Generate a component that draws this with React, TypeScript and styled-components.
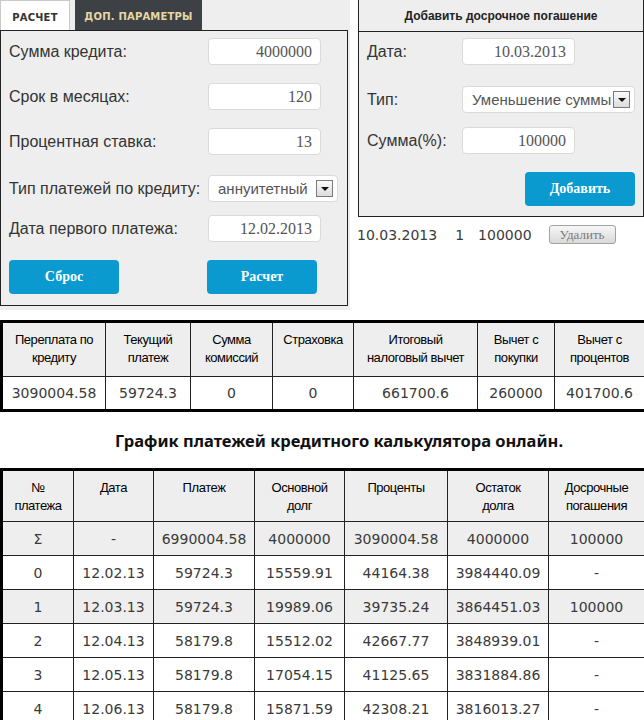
import React from 'react'
import styled, { createGlobalStyle } from 'styled-components'

const GlobalStyle = createGlobalStyle`
  html, body {
    margin: 0;
    padding: 0;
    background: #fff;
  }
  body {
    font-family: "Liberation Sans", Arial, sans-serif;
    color: #333;
  }
`

const Page = styled.div`
  width: 644px;
  overflow: hidden;
`

const Top = styled.div`
  display: flex;
  align-items: flex-start;
`

const LeftBlock = styled.div`
  width: 350px;
  height: 310px;
  background: #eeeeee;
`

const Tabs = styled.div`
  display: flex;
  gap: 5px;
  height: 30px;
`

const Tab = styled.div<{ $active?: boolean; $w: number }>`
  box-sizing: border-box;
  width: ${p => p.$w}px;
  height: 30px;
  display: flex;
  align-items: center;
  justify-content: center;
  padding-top: 3px;
  font: bold 10px "DejaVu Sans", Verdana, sans-serif;
  letter-spacing: 0.2px;
  background: ${p => (p.$active ? '#fff' : '#3d4146')};
  color: ${p => (p.$active ? '#333' : '#e4d9a4')};
  border: ${p => (p.$active ? '1px solid #c9c9c9' : 'none')};
  border-bottom: none;
`

const Panel = styled.div`
  box-sizing: border-box;
  width: 348px;
  height: 276px;
  border: 1px solid #222;
  padding: 7px 0 0 8px;
  display: flex;
  flex-direction: column;
`

const Row = styled.div<{ $mt?: number }>`
  display: flex;
  align-items: center;
  height: 27px;
  margin-top: ${p => p.$mt ?? 0}px;
`

const Label = styled.div<{ $w: number }>`
  width: ${p => p.$w}px;
  font-size: 16px;
  color: #333;
`

const Field = styled.input<{ $w: number }>`
  box-sizing: border-box;
  width: ${p => p.$w}px;
  height: 27px;
  border: 1px solid #dadada;
  border-radius: 4px;
  background: #fff;
  padding: 0 8px 0 0;
  margin: 0;
  text-align: right;
  font: 16px "Liberation Serif", Georgia, serif;
  color: #555;
  outline: none;
`

const Select = styled.div<{ $w: number }>`
  box-sizing: border-box;
  width: ${p => p.$w}px;
  height: 27px;
  border: 1px solid #dadada;
  border-radius: 4px;
  background: #fff;
  display: flex;
  align-items: center;
  justify-content: space-between;
  padding: 0 4px 0 9px;
  font: 15px "Liberation Sans", Arial, sans-serif;
  color: #555;
`

const Arrow = styled.span`
  box-sizing: border-box;
  width: 17px;
  height: 17px;
  border: 1px solid #7a7a7a;
  background: linear-gradient(#fafafa, #dcdcdc);
  display: flex;
  align-items: center;
  justify-content: center;
  &::after {
    content: '';
    border-left: 4px solid transparent;
    border-right: 4px solid transparent;
    border-top: 4px solid #111;
  }
`

const Buttons = styled.div`
  display: flex;
  margin-top: 18px;
  gap: 88px;
`

const BlueButton = styled.button`
  box-sizing: border-box;
  width: 110px;
  height: 34px;
  border: none;
  border-radius: 4px;
  background: #0b9ad0;
  color: #fff;
  font: bold 14px "Liberation Serif", Georgia, serif;
  padding: 0;
  cursor: pointer;
`

const RightCol = styled.div`
  margin-left: 8px;
  width: 286px;
`

const RightPanel = styled.div`
  box-sizing: border-box;
  height: 217px;
  background: #eeeeee;
  border: 1px solid #222;
  border-top: none;
`

const PanelHead = styled.div`
  height: 31px;
  border-bottom: 1px solid #222;
  display: flex;
  align-items: center;
  justify-content: center;
  font: bold 12px "Liberation Sans", Arial, sans-serif;
  color: #222;
`

const PanelBody = styled.div`
  padding: 6px 0 0 8px;
  display: flex;
  flex-direction: column;
`

const AddRow = styled.div`
  display: flex;
  justify-content: flex-end;
  margin-top: 18px;
  padding-right: 8px;
`

const DelRow = styled.div`
  display: flex;
  align-items: center;
  margin-top: 8px;
  margin-left: -1px;
  font: 14px "DejaVu Sans", Verdana, sans-serif;
  color: #3a3a3a;
`

const Cell = styled.span<{ $ml?: number }>`
  margin-left: ${p => p.$ml ?? 0}px;
`

const GrayButton = styled.button`
  box-sizing: border-box;
  margin-left: 17px;
  width: 67px;
  height: 19px;
  padding: 0;
  border: 1px solid #a2a2a2;
  border-radius: 3px;
  background: linear-gradient(#f7f7f7, #d9d9d9);
  font: 13px "Liberation Serif", Georgia, serif;
  color: #7a7a7a;
`

const Table = styled.table<{ $mt: number }>`
  width: 644px;
  margin-top: ${p => p.$mt}px;
  border-collapse: collapse;
  table-layout: fixed;
  border: 3px solid #000;
`

const Th = styled.th<{ $h: number }>`
  height: ${p => p.$h}px;
  box-sizing: border-box;
  padding: 8px 0 0;
  vertical-align: top;
  background: #eeeeee;
  border: 1px solid #222;
  font: 13px "Liberation Sans", Arial, sans-serif;
  letter-spacing: -0.45px;
  line-height: 18px;
  color: #000;
`

const Td = styled.td<{ $h: number; $gray?: boolean }>`
  height: ${p => p.$h}px;
  padding: 0 2px;
  text-align: center;
  background: ${p => (p.$gray ? '#eeeeee' : '#fff')};
  border: 1px solid #222;
  font: 14px "DejaVu Sans", Verdana, sans-serif;
  color: #3a3a3a;
  white-space: nowrap;
`

const Title = styled.h2`
  margin: 17px 0 0;
  padding-left: 34px;
  text-align: center;
  font: bold 16.5px "Noto Sans", "DejaVu Sans", sans-serif;
  color: #111;
`

const summaryCols = [104, 85, 82, 81, 124, 77, 91]
const summaryHead = [
  ['Переплата по', 'кредиту'],
  ['Текущий', 'платеж'],
  ['Сумма', 'комиссий'],
  ['Страховка'],
  ['Итоговый', 'налоговый вычет'],
  ['Вычет с', 'покупки'],
  ['Вычет с', 'процентов'],
]
const summaryData = ['3090004.58', '59724.3', '0', '0', '661700.6', '260000', '401700.6']

const scheduleCols = [72, 80, 101, 90, 103, 101, 97]
const scheduleHead = [
  ['№', 'платежа'],
  ['Дата'],
  ['Платеж'],
  ['Основной', 'долг'],
  ['Проценты'],
  ['Остаток', 'долга'],
  ['Досрочные', 'погашения'],
]
const scheduleRows: { cells: string[]; gray?: boolean }[] = [
  { cells: ['Σ', '-', '6990004.58', '4000000', '3090004.58', '4000000', '100000'], gray: true },
  { cells: ['0', '12.02.13', '59724.3', '15559.91', '44164.38', '3984440.09', '-'] },
  { cells: ['1', '12.03.13', '59724.3', '19989.06', '39735.24', '3864451.03', '100000'], gray: true },
  { cells: ['2', '12.04.13', '58179.8', '15512.02', '42667.77', '3848939.01', '-'] },
  { cells: ['3', '12.05.13', '58179.8', '17054.15', '41125.65', '3831884.86', '-'] },
  { cells: ['4', '12.06.13', '58179.8', '15871.59', '42308.21', '3816013.27', '-'] },
]

function HeadCell({ lines, h }: { lines: string[]; h: number }) {
  return (
    <Th $h={h}>
      {lines.map((l, i) => (
        <div key={i}>{l}</div>
      ))}
    </Th>
  )
}

export default function App() {
  return (
    <Page>
      <GlobalStyle />
      <Top>
        <LeftBlock>
          <Tabs>
            <Tab $active $w={70}>РАСЧЕТ</Tab>
            <Tab $w={127}>ДОП. ПАРАМЕТРЫ</Tab>
          </Tabs>
          <Panel>
            <Row>
              <Label $w={199}>Сумма кредита:</Label>
              <Field $w={113} readOnly value="4000000" />
            </Row>
            <Row $mt={18}>
              <Label $w={199}>Срок в месяцах:</Label>
              <Field $w={113} readOnly value="120" />
            </Row>
            <Row $mt={18}>
              <Label $w={199}>Процентная ставка:</Label>
              <Field $w={113} readOnly value="13" />
            </Row>
            <Row $mt={20}>
              <Label $w={199}>Тип платежей по кредиту:</Label>
              <Select $w={130}>
                аннуитетный
                <Arrow />
              </Select>
            </Row>
            <Row $mt={13}>
              <Label $w={199}>Дата первого платежа:</Label>
              <Field $w={113} readOnly value="12.02.2013" />
            </Row>
            <Buttons>
              <BlueButton>Сброс</BlueButton>
              <BlueButton>Расчет</BlueButton>
            </Buttons>
          </Panel>
        </LeftBlock>
        <RightCol>
          <RightPanel>
            <PanelHead>Добавить досрочное погашение</PanelHead>
            <PanelBody>
              <Row>
                <Label $w={95}>Дата:</Label>
                <Field $w={113} readOnly value="10.03.2013" />
              </Row>
              <Row $mt={21}>
                <Label $w={95}>Тип:</Label>
                <Select $w={173}>
                  Уменьшение суммы
                  <Arrow />
                </Select>
              </Row>
              <Row $mt={14}>
                <Label $w={95}>Сумма(%):</Label>
                <Field $w={113} readOnly value="100000" />
              </Row>
              <AddRow>
                <BlueButton>Добавить</BlueButton>
              </AddRow>
            </PanelBody>
          </RightPanel>
          <DelRow>
            <Cell>10.03.2013</Cell>
            <Cell $ml={18}>1</Cell>
            <Cell $ml={14}>100000</Cell>
            <GrayButton>Удалить</GrayButton>
          </DelRow>
        </RightCol>
      </Top>

      <Table $mt={10}>
        <colgroup>
          {summaryCols.map((w, i) => (
            <col key={i} style={{ width: w }} />
          ))}
        </colgroup>
        <thead>
          <tr>
            {summaryHead.map((l, i) => (
              <HeadCell key={i} lines={l} h={55} />
            ))}
          </tr>
        </thead>
        <tbody>
          <tr>
            {summaryData.map((v, i) => (
              <Td key={i} $h={32}>{v}</Td>
            ))}
          </tr>
        </tbody>
      </Table>

      <Title>График платежей кредитного калькулятора онлайн.</Title>

      <Table $mt={16}>
        <colgroup>
          {scheduleCols.map((w, i) => (
            <col key={i} style={{ width: w }} />
          ))}
        </colgroup>
        <thead>
          <tr>
            {scheduleHead.map((l, i) => (
              <HeadCell key={i} lines={l} h={52} />
            ))}
          </tr>
        </thead>
        <tbody>
          {scheduleRows.map((r, ri) => (
            <tr key={ri}>
              {r.cells.map((v, i) => (
                <Td key={i} $h={33} $gray={r.gray}>{v}</Td>
              ))}
            </tr>
          ))}
        </tbody>
      </Table>
    </Page>
  )
}
